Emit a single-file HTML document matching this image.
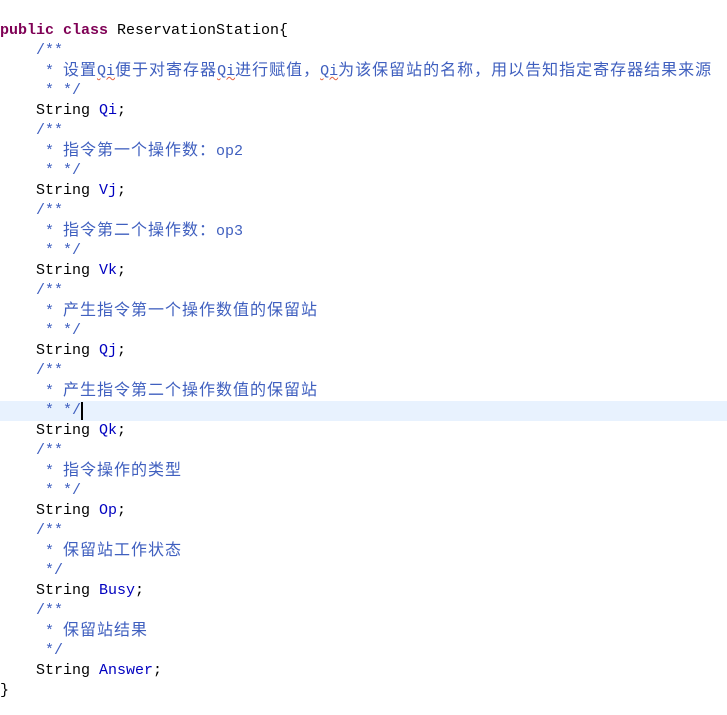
<!DOCTYPE html>
<html><head><meta charset="utf-8"><style>
body{margin:0;background:#fff;width:727px;height:715px;overflow:hidden;position:relative}
.c{position:absolute;left:0;top:21px;font-family:"Liberation Mono",monospace;font-size:15px;line-height:20px;white-space:pre;color:#000}
.l{height:20px}
.k{color:#7f0055;font-weight:bold}
.f{color:#0000c0}
.d{color:#3f5fbf}
.z{font-family:"Liberation Sans","Noto Sans CJK SC",sans-serif;font-size:16px;letter-spacing:1px}
.u{text-decoration:underline wavy #e06040;text-decoration-thickness:1px}
.hl{position:absolute;left:0;top:401px;width:727px;height:20px;background:#e8f2fe}
.cur{position:absolute;left:81px;top:402px;width:2px;height:18px;background:#000}
</style></head><body>
<div class="hl"></div><div class="cur"></div>
<div class="c"><div class="l"><span class="k">public class</span> ReservationStation{</div><div class="l d">    /**</div><div class="l d">     * <span class="z">设置</span><span class="u">Qi</span><span class="z">便于对寄存器</span><span class="u">Qi</span><span class="z">进行赋值，</span><span class="u">Qi</span><span class="z">为该保留站的名称，用以告知指定寄存器结果来源</span></div><div class="l d">     * */</div><div class="l">    String <span class="f">Qi</span>;</div><div class="l d">    /**</div><div class="l d">     * <span class="z">指令第一个操作数：</span>op2</div><div class="l d">     * */</div><div class="l">    String <span class="f">Vj</span>;</div><div class="l d">    /**</div><div class="l d">     * <span class="z">指令第二个操作数：</span>op3</div><div class="l d">     * */</div><div class="l">    String <span class="f">Vk</span>;</div><div class="l d">    /**</div><div class="l d">     * <span class="z">产生指令第一个操作数值的保留站</span></div><div class="l d">     * */</div><div class="l">    String <span class="f">Qj</span>;</div><div class="l d">    /**</div><div class="l d">     * <span class="z">产生指令第二个操作数值的保留站</span></div><div class="l d">     * */</div><div class="l">    String <span class="f">Qk</span>;</div><div class="l d">    /**</div><div class="l d">     * <span class="z">指令操作的类型</span></div><div class="l d">     * */</div><div class="l">    String <span class="f">Op</span>;</div><div class="l d">    /**</div><div class="l d">     * <span class="z">保留站工作状态</span></div><div class="l d">     */</div><div class="l">    String <span class="f">Busy</span>;</div><div class="l d">    /**</div><div class="l d">     * <span class="z">保留站结果</span></div><div class="l d">     */</div><div class="l">    String <span class="f">Answer</span>;</div><div class="l">}</div></div>
</body></html>
